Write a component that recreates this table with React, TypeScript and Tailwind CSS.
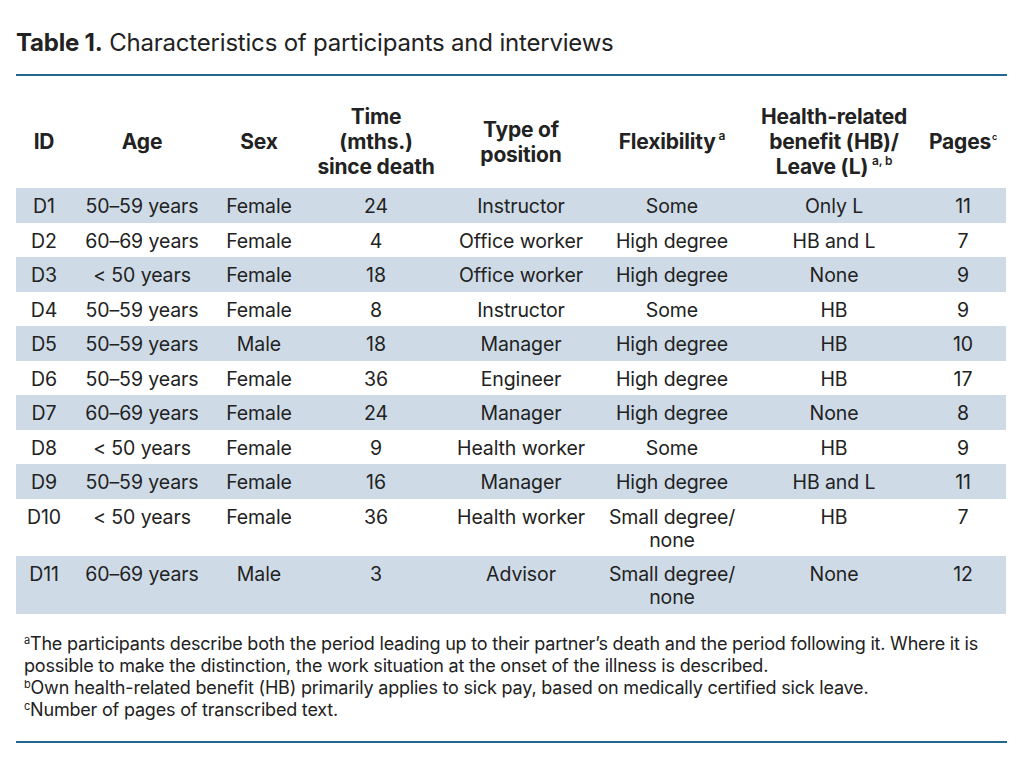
import React from "react";

type Row = {
  id: string;
  age: string;
  sex: string;
  time: string;
  position: string;
  flex: React.ReactNode;
  benefit: string;
  pages: string;
};

const rows: Row[] = [
  { id: "D1", age: "50–59 years", sex: "Female", time: "24", position: "Instructor", flex: "Some", benefit: "Only L", pages: "11" },
  { id: "D2", age: "60–69 years", sex: "Female", time: "4", position: "Office worker", flex: "High degree", benefit: "HB and L", pages: "7" },
  { id: "D3", age: "< 50 years", sex: "Female", time: "18", position: "Office worker", flex: "High degree", benefit: "None", pages: "9" },
  { id: "D4", age: "50–59 years", sex: "Female", time: "8", position: "Instructor", flex: "Some", benefit: "HB", pages: "9" },
  { id: "D5", age: "50–59 years", sex: "Male", time: "18", position: "Manager", flex: "High degree", benefit: "HB", pages: "10" },
  { id: "D6", age: "50–59 years", sex: "Female", time: "36", position: "Engineer", flex: "High degree", benefit: "HB", pages: "17" },
  { id: "D7", age: "60–69 years", sex: "Female", time: "24", position: "Manager", flex: "High degree", benefit: "None", pages: "8" },
  { id: "D8", age: "< 50 years", sex: "Female", time: "9", position: "Health worker", flex: "Some", benefit: "HB", pages: "9" },
  { id: "D9", age: "50–59 years", sex: "Female", time: "16", position: "Manager", flex: "High degree", benefit: "HB and L", pages: "11" },
  { id: "D10", age: "< 50 years", sex: "Female", time: "36", position: "Health worker", flex: <>Small degree/<br />none</>, benefit: "HB", pages: "7" },
  { id: "D11", age: "60–69 years", sex: "Male", time: "3", position: "Advisor", flex: <>Small degree/<br />none</>, benefit: "None", pages: "12" },
];

export default function App() {
  return (
    <div className="h-[764px] w-[1024px] bg-white px-4 pt-[27px] text-[#222] font-['Inter',sans-serif]">
      <h1 className="text-[24px] leading-[32px] tracking-[-0.2px]">
        <span className="font-bold">Table 1.</span> Characteristics of participants and interviews
      </h1>
      <div className="mt-[15px] h-[2px] w-[991px] bg-[#22678f]" />

      <table className="mt-[19px] w-[990px] table-fixed border-collapse text-center text-[19.5px]">
        <colgroup>
          <col className="w-[56px]" />
          <col className="w-[140px]" />
          <col className="w-[94px]" />
          <col className="w-[140px]" />
          <col className="w-[150px]" />
          <col className="w-[152px]" />
          <col className="w-[172px]" />
          <col className="w-[86px]" />
        </colgroup>
        <thead>
          <tr className="h-[93px] align-middle text-[21px] font-bold leading-[25px] tracking-[-0.2px]">
            <th>ID</th>
            <th>Age</th>
            <th>Sex</th>
            <th>
              Time
              <br />
              (mths.)
              <br />
              since death
            </th>
            <th>
              Type of
              <br />
              position
            </th>
            <th>
              Flexibility<sup className="top-[-0.75em] ml-[3px] text-[12px] font-semibold">a</sup>
            </th>
            <th>
              Health-related
              <br />
              benefit (HB)/
              <br />
              Leave (L)<sup className="top-[-0.75em] ml-[4px] text-[12px] font-semibold">a, b</sup>
            </th>
            <th>
              Pages<sup className="top-[-1em] ml-[1px] text-[9px] font-semibold">c</sup>
            </th>
          </tr>
        </thead>
        <tbody className="leading-[23px] tracking-[-0.1px]">
          {rows.map((r, i) => (
            <tr key={r.id} className={i % 2 === 0 ? "bg-[#cedbe7] align-top" : "bg-white align-top"}>
              <td className="pt-[7px] pb-[4.5px]">{r.id}</td>
              <td className="pt-[7px] pb-[4.5px]">{r.age}</td>
              <td className="pt-[7px] pb-[4.5px]">{r.sex}</td>
              <td className="pt-[7px] pb-[4.5px]">{r.time}</td>
              <td className="pt-[7px] pb-[4.5px]">{r.position}</td>
              <td className="pt-[7px] pb-[4.5px]">{r.flex}</td>
              <td className="pt-[7px] pb-[4.5px]">{r.benefit}</td>
              <td className="pt-[7px] pb-[4.5px]">{r.pages}</td>
            </tr>
          ))}
        </tbody>
      </table>

      <div className="mt-[19px] pl-2 text-[18px] leading-[22px] tracking-[-0.2px]">
        <p>
          <sup className="text-[11px]">a</sup>The participants describe both the period leading up to their partner’s death and the period following it. Where it is possible to make the distinction, the work situation at the onset of the illness is described.
        </p>
        <p>
          <sup className="text-[11px]">b</sup>Own health-related benefit (HB) primarily applies to sick pay, based on medically certified sick leave.
        </p>
        <p>
          <sup className="text-[11px]">c</sup>Number of pages of transcribed text.
        </p>
      </div>
      <div className="mt-[20px] h-[2px] w-[991px] bg-[#22678f]" />
    </div>
  );
}
